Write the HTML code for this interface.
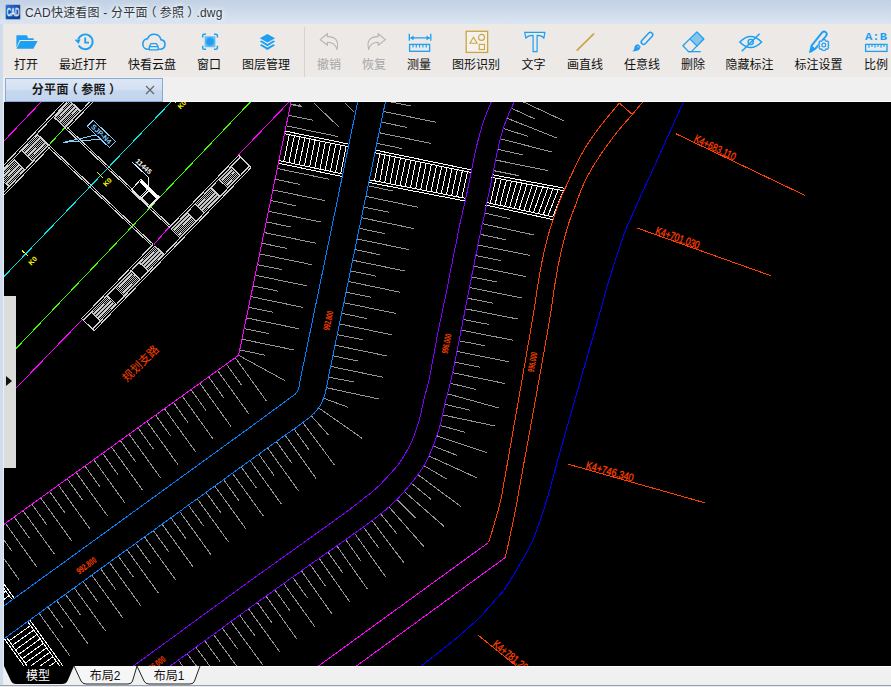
<!DOCTYPE html>
<html lang="zh"><head><meta charset="utf-8"><title>CAD快速看图 - 分平面（参照）.dwg</title>
<style>
html,body{margin:0;padding:0;}
body{width:891px;height:687px;overflow:hidden;position:relative;background:#f0f0f0;
 font-family:"Liberation Sans","Noto Sans CJK SC",sans-serif;}
#title{position:absolute;left:0;top:0;width:891px;height:24px;
 background:linear-gradient(#c2d1e4 0px,#cad8e9 9px,#d7e2ef 20px,#dbe5f1 24px);}
#lborder{position:absolute;left:0;top:24px;width:3px;height:663px;background:#cfdcec;border-right:1px solid #e6edf5;}
#appicon{position:absolute;left:5px;top:4px;width:16px;height:16px;}
#ttext{position:absolute;left:25px;top:4px;font-size:12px;line-height:18px;color:#2e3540;white-space:nowrap;letter-spacing:0.2px;
 text-shadow:0 0 4px #fff,0 0 6px #fff;}
span.pl{position:relative;left:-3px;}span.pr{position:relative;left:3px;}
#toolbar{position:absolute;left:3px;top:24px;width:888px;height:53px;background:#ece9e6;}
.ti{position:absolute;top:0;height:53px;width:0;}
.ti .lb{position:absolute;left:-40px;width:80px;top:33px;text-align:center;font-size:12px;line-height:16px;color:#111;white-space:nowrap;}
.ti.dis .lb{color:#a6a6a6;}
.ti svg{position:absolute;left:-13px;top:5px;width:26px;height:26px;overflow:visible;}
#sep{position:absolute;left:301px;top:3px;width:1px;height:50px;background:#d6d3cf;}
#tabbar{position:absolute;left:3px;top:77px;width:888px;height:25px;background:#f0f0f0;}
#tabbar:after{content:'';position:absolute;left:160px;top:24px;width:728px;height:1px;background:#fcfcfc;}
#tab{position:absolute;left:2px;top:1px;width:158px;border:1px solid #86a9d6;box-sizing:border-box;height:24px;
 background:linear-gradient(#dde8f6 0,#d4e1f3 45%,#c6d7ef 55%,#c3d5ee 100%);}
#tab b{position:absolute;left:-1px;width:140px;top:2px;text-align:center;font-size:12px;line-height:18px;color:#1a1a1a;letter-spacing:0.35px;}
#tab svg{position:absolute;left:139px;top:6px;width:10px;height:10px;}
#cv{position:absolute;left:4px;top:102px;width:887px;height:564px;background:#000;}
#cv svg{position:absolute;left:0;top:0;}
#lpanel{position:absolute;left:4px;top:296px;width:12px;height:172px;background:#dcdcdc;}
#lpanel:after{content:"";position:absolute;left:2px;top:80px;border-left:6px solid #111;border-top:5px solid transparent;border-bottom:5px solid transparent;}
#bottom{position:absolute;left:4px;top:666px;width:887px;height:21px;background:#f0f0f0;border-top:1px solid #fff;box-sizing:border-box;}
#bline{position:absolute;left:0;top:685px;width:891px;height:1px;background:#9aa0a8;}
#bline2{position:absolute;left:0;top:686px;width:891px;height:1px;background:#e8ecf2;}
#btabs{position:absolute;left:4px;top:666px;width:260px;height:20px;}
#btabs text{font-family:"Liberation Sans","Noto Sans CJK SC",sans-serif;font-size:12px;}
</style></head><body>
<div id="title"><svg id="appicon" viewBox="0 0 16 16"><defs><linearGradient id="ag" x1="0" y1="0" x2="1" y2="1"><stop offset="0" stop-color="#2a78d8"/><stop offset="0.5" stop-color="#0b50b4"/><stop offset="1" stop-color="#083c96"/></linearGradient></defs><rect x="0.5" y="0.5" width="15" height="15" rx="1.5" fill="url(#ag)" stroke="#a9b2bd" stroke-width="1"/><text x="8" y="12.2" text-anchor="middle" font-family="Liberation Sans, sans-serif" font-size="10" fill="none" stroke="#fff" stroke-width="0.7" textLength="12.5" lengthAdjust="spacingAndGlyphs">CAD</text></svg><div id="ttext">CAD快速看图 - 分平面<span class="pl">（</span>参照<span class="pr">）</span>.dwg</div></div>
<div id="lborder"></div>
<div id="toolbar">
<div class="ti" style="left:23px"><svg viewBox="0 0 26 26" fill="none"><path d="M3.4 6.3 H13.9 L15.1 9.3 H20.7 V11 H6.6 L3.4 18.8 Z" fill="#1e9ff2"/><path d="M7.4 11.9 H24.6 L20.4 19.8 H3.4 Z" fill="#1e9ff2"/></svg><div class="lb">打开</div></div>
<div class="ti" style="left:80px"><svg viewBox="0 0 26 26" fill="none"><path d="M8.25 10.3 A7.4 7.4 0 1 1 8.8 16.5" stroke="#1e9ff2" stroke-width="1.9"/><path d="M4.6 10.8 L10.6 10.2 L8.6 15 Z" fill="#1e9ff2"/><path d="M15.2 8.6 V13.7 H19" stroke="#1e9ff2" stroke-width="1.8"/></svg><div class="lb">最近打开</div></div>
<div class="ti" style="left:149px"><svg viewBox="0 0 26 26" fill="none"><path d="M9.6 20.3 H8.4 A5.4 5.4 0 0 1 8.6 9.6 A7 7 0 0 1 21.9 10.6 A4.9 4.9 0 0 1 21.6 20.3 H19.8" stroke="#1e9ff2" stroke-width="1.6" stroke-linecap="round"/><path d="M10.3 20.8 V17.6 L12 14.6 H17.4 L19.1 17.6 V20.8 Z M10.3 17.7 H19.1" stroke="#1e9ff2" stroke-width="1.3" stroke-linejoin="round"/></svg><div class="lb">快看云盘</div></div>
<div class="ti" style="left:206px"><svg viewBox="0 0 26 26" fill="none"><defs><radialGradient id="wg"><stop offset="0.55" stop-color="#1e9ff2"/><stop offset="1" stop-color="#6cc0f6"/></radialGradient></defs><rect x="8.6" y="7.2" width="10.8" height="11" fill="url(#wg)"/><path d="M6.7 8.6 V6.6 Q6.7 5.2 8.1 5.2 H10 M18 5.2 H19.9 Q21.4 5.2 21.4 6.6 V8.6 M21.4 16.8 V18.9 Q21.4 20.3 19.9 20.3 H18 M10 20.3 H8.1 Q6.7 20.3 6.7 18.9 V16.8" stroke="#1e9ff2" stroke-width="1.5"/></svg><div class="lb">窗口</div></div>
<div class="ti" style="left:263px"><svg viewBox="0 0 26 26" fill="none"><path d="M14.4 4.9 L22.1 9.2 L14.4 13.6 L6.8 9.2 Z" fill="#1e9ff2"/><path d="M6.8 12.6 L8.6 11.6 L14.4 14.9 L20.3 11.6 L22.1 12.6 L14.4 17.2 Z" fill="#1e9ff2"/><path d="M6.8 16.3 L8.6 15.3 L14.4 18.6 L20.3 15.3 L22.1 16.3 L14.4 20.9 Z" fill="#1e9ff2"/></svg><div class="lb">图层管理</div></div>
<div class="ti dis" style="left:326px"><svg viewBox="0 0 26 26" fill="none"><path d="M4.2 10.6 L11.4 4.7 V7.6 C18.5 7.4 23.5 11 20.9 20.5 C19.8 15.4 17 13.4 11.4 13.3 V16.2 Z" stroke="#b4b4b4" stroke-width="1.1" stroke-linejoin="round"/></svg><div class="lb">撤销</div></div>
<div class="ti dis" style="left:371px"><svg viewBox="0 0 26 26" fill="none"><g transform="translate(28.6 0) scale(-1 1)"><path d="M4.2 10.6 L11.4 4.7 V7.6 C18.5 7.4 23.5 11 20.9 20.5 C19.8 15.4 17 13.4 11.4 13.3 V16.2 Z" stroke="#b4b4b4" stroke-width="1.1" stroke-linejoin="round"/></g></svg><div class="lb">恢复</div></div>
<div class="ti" style="left:416px"><svg viewBox="0 0 26 26" fill="none"><path d="M3.3 4.7 V11.8 M24.8 4.7 V11.8 M4.5 8.9 H23.6" stroke="#1e9ff2" stroke-width="1.3"/><path d="M4 8.9 L7.6 6.6 V11.2 Z M24.1 8.9 L20.5 6.6 V11.2 Z" fill="#1e9ff2"/><rect x="3.6" y="15.4" width="20" height="6.9" stroke="#1e9ff2" stroke-width="1.3"/><path d="M7 15.4 V18.6 M10.3 15.4 V18.6 M13.6 15.4 V18.6 M16.9 15.4 V18.6 M20.2 15.4 V18.6" stroke="#1e9ff2" stroke-width="1.2"/></svg><div class="lb">测量</div></div>
<div class="ti" style="left:473px"><svg viewBox="0 0 26 26" fill="none"><rect x="3.2" y="2.3" width="21.4" height="21.1" fill="#f5f2ed" stroke="#c9a545" stroke-width="1.3"/><path d="M10.5 8.3 L14.1 14.3 H6.9 Z" stroke="#c9a545" stroke-width="1.1"/><circle cx="18.5" cy="8.4" r="3" stroke="#c9a545" stroke-width="1.1"/><rect x="16.2" y="15.4" width="5.3" height="5.1" stroke="#c9a545" stroke-width="1.1"/></svg><div class="lb">图形识别</div></div>
<div class="ti" style="left:530.5px"><svg viewBox="0 0 26 26" fill="none"><path d="M3.7 3.3 H23.9 L22.8 9.3 Q21.2 6.3 16.1 6.3 V22.7 H12.1 V6.3 Q6.6 6.3 4.9 9.3 Z" stroke="#1e9ff2" stroke-width="1.2" stroke-linejoin="round"/></svg><div class="lb">文字</div></div>
<div class="ti" style="left:582px"><svg viewBox="0 0 26 26" fill="none"><path d="M4.7 21.7 L22 4.7" stroke="#c9a545" stroke-width="1.7"/></svg><div class="lb">画直线</div></div>
<div class="ti" style="left:639px"><svg viewBox="0 0 26 26" fill="none"><g transform="translate(17.8 9.6) rotate(-47)"><rect x="-7" y="-2.3" width="14.6" height="4.6" rx="2.2" stroke="#1e9ff2" stroke-width="1.5"/></g><path d="M11.6 17.4 Q11.2 21.5 6.8 21.9 Q4.6 22.1 3.2 22.8 Q5.4 20.6 5.4 18.4 Q5.8 15.4 9.2 15.2 Z" fill="#1e9ff2"/><path d="M8.3 17 L9.9 18.6" stroke="#eee" stroke-width="0.8"/></svg><div class="lb">任意线</div></div>
<div class="ti" style="left:690px"><svg viewBox="0 0 26 26" fill="none"><path d="M16.9 2.9 L23.9 10 L11.4 22.6 H8.6 L2.9 16.8 Z" stroke="#1e9ff2" stroke-width="1.3" stroke-linejoin="round"/><path d="M16.9 2.9 L23.9 10 L17.3 17.4 L10.3 10.4 Z" fill="#1e9ff2" fill-opacity="0.5"/><path d="M10.3 10.4 L17.3 17.4 M7.8 22.6 H20.8" stroke="#1e9ff2" stroke-width="1.3"/></svg><div class="lb">删除</div></div>
<div class="ti" style="left:746.5px"><svg viewBox="0 0 26 26" fill="none"><path d="M2.8 13 Q13.7 1.8 24.6 13 Q13.7 24.2 2.8 13 Z" stroke="#1e9ff2" stroke-width="1.5"/><circle cx="13.7" cy="13" r="2.6" stroke="#1e9ff2" stroke-width="1.4"/><path d="M4.8 22.3 L22.6 4.7" stroke="#1e9ff2" stroke-width="1.5"/></svg><div class="lb">隐藏标注</div></div>
<div class="ti" style="left:815.5px"><svg viewBox="0 0 26 26" fill="none"><path d="M16 3.6 Q18 1.6 20 3.4 Q21.6 5 20 7 L9.4 19.6 L4.1 22.9 L5.6 16.6 Z" stroke="#1e9ff2" stroke-width="1.9" stroke-linejoin="round"/><path d="M5.6 16.6 L9.4 19.6 L4.1 22.9 Z" fill="#1e9ff2"/><circle cx="17.8" cy="16.1" r="5.6" fill="#ece9e6"/><path d="M17.8 10.6 l1.6 0.3 0.6 1.4 1.5 -0.3 1.2 1.4 -0.7 1.3 0.9 1.3 -0.9 1.4 0.7 1.3 -1.2 1.4 -1.5 -0.3 -0.6 1.4 -1.6 0.3 -1.6 -0.3 -0.6 -1.4 -1.5 0.3 -1.2 -1.4 0.7 -1.3 -0.9 -1.4 0.9 -1.3 -0.7 -1.3 1.2 -1.4 1.5 0.3 0.6 -1.4 Z" stroke="#1e9ff2" stroke-width="1.2" stroke-linejoin="round"/><circle cx="17.8" cy="16.1" r="1.9" stroke="#1e9ff2" stroke-width="1.2"/></svg><div class="lb">标注设置</div></div>
<div class="ti" style="left:873px"><svg viewBox="0 0 26 26" fill="none"><text x="13" y="11.2" text-anchor="middle" font-family="Liberation Mono, monospace" font-weight="bold" font-size="10" fill="#1e9ff2" textLength="22" lengthAdjust="spacingAndGlyphs">A:B</text><rect x="2.6" y="15.4" width="21.4" height="7" stroke="#1e9ff2" stroke-width="1.3"/><path d="M6 15.4 V18.8 M9 15.4 V18 M12 15.4 V18.8 M15 15.4 V18 M18 15.4 V18.8 M21 15.4 V18" stroke="#1e9ff2" stroke-width="1.1"/></svg><div class="lb">比例</div></div>
<div id="sep"></div></div>
<div id="tabbar"><div id="tab"><b>分平面<span class="pl">（</span>参照<span class="pr">）</span></b><svg viewBox="0 0 10 10"><path d="M1 1 L9 9 M9 1 L1 9" stroke="#666" stroke-width="1.2" fill="none"/></svg></div></div>
<div id="cv"><svg width="887" height="564" viewBox="4 102 887 564" shape-rendering="crispEdges" fill="none" stroke-width="1">
<rect x="4" y="102" width="887" height="564" fill="#000"/>
<path stroke="#959595" d="M290.5 104.5 L300.3 106.5 M288.3 115.2 L313.3 120.3 M286.1 125.8 L338.3 136.6 M283.9 136.5 L308.9 141.7 M281.7 147.2 L333.9 158 M279.5 157.8 L304.4 163 M277.3 168.5 L329.4 179.3 M275.1 179.2 L300 184.4 M272.8 189.9 L325 200.7 M270.6 200.5 L295.6 205.7 M268.4 211.2 L320.6 222 M266.2 221.9 L291.2 227 M264 232.5 L316.2 243.3 M261.8 243.2 L286.8 248.4 M259.6 253.9 L311.8 264.7 M257.4 264.6 L282.3 269.7 M255.2 275.2 L307.4 286 M253 285.9 L277.9 291.1 M250.8 296.6 L302.9 307.4 M248.6 307.2 L273.5 312.4 M246.3 317.9 L298.5 328.7 M244.1 328.6 L269.1 333.7 M241.9 339.2 L294.1 350 M239.7 349.9 L264.7 355.1 M238.6 355.3 L284.7 380.5 M235.2 357.7 L266.5 401.2 M226.4 364.1 L241.6 385.2 M217.5 370.5 L248.8 413.9 M208.7 376.9 L223.9 398 M199.8 383.2 L231.1 426.6 M191 389.6 L206.2 410.7 M182.2 396 L213.4 439.4 M173.3 402.3 L188.5 423.4 M164.5 408.7 L195.8 452.1 M155.6 415.1 L170.8 436.2 M146.8 421.4 L178.1 464.8 M138 427.8 L153.2 448.9 M129.1 434.2 L160.4 477.6 M120.3 440.5 L135.5 461.6 M111.4 446.9 L142.7 490.3 M102.6 453.3 L117.8 474.4 M93.8 459.7 L125 503.1 M84.9 466 L100.1 487.1 M76.1 472.4 L107.4 515.8 M67.2 478.8 L82.4 499.9 M58.4 485.1 L89.7 528.5 M49.6 491.5 L64.8 512.6 M40.7 497.9 L72 541.3 M31.9 504.2 L47.1 525.3 M23 510.6 L54.3 554 M14.2 517 L29.4 538.1 M5.4 523.3 L36.6 566.8 M-3.5 529.7 L11.7 550.8 M-12.3 536.1 L19 579.5 M-21.2 542.5 L-6 563.6 M-30 548.8 L1.3 592.2 M-38.8 555.2 L-23.6 576.3 M-47.7 561.6 L-16.4 605 M-56.5 567.9 L-41.3 589 M387.8 90.2 L440 101 M385.6 100.8 L411 106.1 M383.4 111.4 L435.6 122.2 M381.2 122.1 L406.7 127.3 M379 132.7 L431.2 143.5 M376.8 143.3 L402.3 148.6 M374.6 153.9 L426.8 164.7 M372.4 164.6 L397.9 169.8 M370.2 175.2 L422.4 186 M368 185.8 L393.5 191.1 M365.8 196.4 L418 207.2 M363.6 207.1 L389.1 212.3 M361.4 217.7 L413.6 228.5 M359.2 228.3 L384.7 233.6 M357 238.9 L409.2 249.7 M354.8 249.6 L380.3 254.8 M352.6 260.2 L404.8 271 M350.4 270.8 L375.9 276.1 M348.2 281.4 L400.4 292.3 M346 292.1 L371.5 297.3 M343.8 302.7 L396 313.5 M341.6 313.3 L367.1 318.6 M339.4 323.9 L391.6 334.8 M337.2 334.6 L362.7 339.8 M335 345.2 L387.2 356 M332.8 355.8 L358.3 361.1 M330.6 366.4 L382.8 377.2 M328.5 377.1 L354 382 M326.4 387.7 L378.5 398.9 M323.5 398.2 L347.9 407.2 M318.6 407.8 L362.2 438.4 M311.3 415.8 L328.7 435.2 M302.8 422.6 L334.7 465.3 M294 428.9 L309.2 450.1 M285.2 435.2 L316.2 478.6 M276.4 441.5 L291.5 462.7 M267.6 447.9 L298.7 491.1 M258.8 454.2 L273.9 475.3 M250 460.5 L281.2 503.8 M241.2 466.9 L256.4 488 M232.4 473.3 L263.6 516.4 M223.6 479.6 L238.8 500.7 M214.8 486 L246.1 529.2 M206 492.4 L221.3 513.4 M197.2 498.7 L228.5 541.9 M188.4 505.1 L203.7 526.1 M179.7 511.5 L210.9 554.6 M170.9 517.8 L186.1 538.9 M162.1 524.2 L193.4 567.3 M153.3 530.5 L168.6 551.6 M144.5 536.9 L175.8 580.1 M135.7 543.3 L151 564.3 M126.9 549.6 L158.2 592.8 M118.2 556 L133.4 577.1 M109.4 562.4 L140.6 605.5 M100.6 568.7 L115.8 589.8 M91.8 575.1 L123.1 618.3 M83 581.5 L98.3 602.5 M74.2 587.8 L105.5 631 M65.4 594.2 L80.7 615.3 M56.6 600.6 L87.9 643.7 M47.9 606.9 L63.1 628 M39.1 613.3 L70.3 656.5 M520.5 88.6 L544 99.6 M515.9 98.4 L564.1 121 M511.3 108.2 L534.9 119 M507 118.2 L556.5 137.9 M503.3 128.4 L528 136.4 M500.3 138.8 L551.9 152 M497.8 149.4 L523.2 155 M495.6 160 L547.8 170.6 M493.5 170.6 L519 175.7 M491.3 181.3 L543.6 191.9 M489.2 191.9 L514.6 197.1 M487 202.5 L539.2 213.5 M484.7 213.1 L510.1 218.7 M482.4 223.7 L534.5 235.1 M480.1 234.3 L505.5 239.7 M477.9 245 L530.2 255.5 M475.8 255.6 L501.3 260.7 M473.7 266.2 L526 276.6 M471.6 276.9 L497.1 282 M469.5 287.5 L521.8 297.9 M467.4 298.2 L492.9 303.2 M465.3 308.8 L517.6 319 M463.2 319.5 L488.7 324.4 M461.1 330.1 L513.4 340.3 M459.1 340.8 L484.6 345.7 M457 351.4 L509.2 361.9 M454.8 362.1 L480.3 367.3 M452.6 372.7 L504.8 383.5 M450.3 383.3 L475.6 389.3 M447.5 393.8 L498.9 408 M444.8 404.3 L470.1 410.2 M442.5 414.9 L494.7 425.9 M440.1 425.4 L465.1 432.3 M436.8 435.8 L487.4 452.8 M433.2 446 L457.3 455.5 M428.9 456 L477.4 478.1 M424 465.7 L446.4 478.8 M417.9 474.7 L460.7 506.4 M411.3 483.2 L431.4 499.6 M404.2 491.5 L444.3 526.6 M396.9 499.4 L415.3 517.8 M388.9 506.8 L424.1 546.9 M380.7 513.8 L397 534 M372.1 520.5 L404.1 563.1 M363.4 527 L378.7 547.9 M354.6 533.3 L385.5 576.7 M345.7 539.6 L360.7 560.8 M336.8 545.8 L367.6 589.4 M328 552.1 L343 573.3 M319.1 558.3 L349.8 601.9 M310.2 564.6 L325.2 585.8 M301.4 570.8 L332.2 614.3 M292.5 577.1 L307.7 598.3 M283.7 583.5 L314.8 626.8 M274.9 589.8 L290 610.9 M266.1 596.1 L297.1 639.4 M257.3 602.4 L272.4 623.5 M248.5 608.8 L279.8 651.9 M239.7 615.2 L255.1 636.1 M230.9 621.6 L262.5 664.6 M222.2 628 L237.6 648.9 M213.4 634.4 L245 677.4 M204.7 640.8 L220.1 661.8 M195.9 647.2 L227.5 690.2 M187.2 653.6 L202.6 674.6 M178.4 660.1 L209.9 703 M169.7 666.5 L185 687.5 M160.9 672.9 L192.4 715.9"/>
<path stroke="#959595" d="M313.8 103 L339 127 M344.9 103 L354.2 112 M291.5 104 L301 106.3 L299.5 104.3"/>
<path fill="#000" stroke="none" d="M285.2 131.1 L348.8 144.1 L342.4 176.6 L278.6 163.2 Z"/>
<path fill="#000" stroke="none" d="M375.7 150.2 L472 170 L465.3 201 L369.3 182.5 Z"/>
<path fill="#000" stroke="none" d="M492 174.7 L564.5 188.2 L552.7 219.5 L485.4 205 Z"/>
<path stroke="#ffffff" d="M285.2 131.1 L348.8 144.1 M278.6 163.2 L342.4 176.6 M284.7 133.7 L348.3 146.7 M279.1 160.6 L342.9 174 M289.3 134.7 L283.8 161.5 M294.4 135.7 L288.9 162.6 M299.6 136.8 L294.1 163.7 M304.8 137.9 L299.3 164.8 M309.9 138.9 L304.5 165.9 M315.1 140 L309.7 167 M320.2 141 L314.8 168.1 M325.4 142.1 L320 169.1 M330.6 143.1 L325.2 170.2 M335.7 144.2 L330.4 171.3 M340.9 145.2 L335.6 172.4 M346.1 146.3 L340.7 173.5 M375.7 150.2 L472 170 M369.3 182.5 L465.3 201 M375.2 152.8 L471.5 172.6 M369.8 179.9 L465.8 198.4 M379.8 153.8 L374.4 180.7 M384.9 154.9 L379.6 181.7 M390.1 155.9 L384.7 182.7 M395.3 157 L389.9 183.7 M400.4 158 L395 184.7 M405.6 159.1 L400.1 185.7 M410.8 160.2 L405.3 186.7 M415.9 161.2 L410.4 187.7 M421.1 162.3 L415.6 188.7 M426.2 163.3 L420.7 189.7 M431.4 164.4 L425.9 190.7 M436.6 165.5 L431 191.6 M441.7 166.5 L436.2 192.6 M446.9 167.6 L441.3 193.6 M452 168.7 L446.5 194.6 M457.2 169.7 L451.6 195.6 M462.4 170.8 L456.7 196.6 M467.5 171.8 L461.9 197.6 M492 174.7 L564.5 188.2 M485.4 205 L552.7 219.5 M491.4 177.3 L563.9 190.8 M486 202.4 L553.3 216.9 M496 178.2 L490.3 203.3 M501.2 179.2 L495.1 204.3 M506.4 180.1 L499.9 205.4 M511.6 181.1 L504.7 206.4 M516.8 182.1 L509.5 207.4 M522 183 L514.3 208.5 M527.1 184 L519.1 209.5 M532.3 185 L523.9 210.5 M537.5 185.9 L528.7 211.6 M542.7 186.9 L533.5 212.6 M547.9 187.8 L538.4 213.6 M553 188.8 L543.2 214.7 M558.2 189.8 L548 215.7 M563.4 190.7 L552.8 216.8"/>
<path stroke="#ffffff" d="M4.1 638.4 L45 695.2 M6.2 636.9 L47.1 693.7 M27.6 621.4 L68.5 678.2 M29.7 619.9 L70.7 676.7 M9.1 640.9 L30.6 625.5 M12.3 645.4 L33.8 630 M15.6 649.9 L37 634.4 M18.8 654.3 L40.2 638.9 M22 658.8 L43.4 643.4 M25.2 663.2 L46.6 647.8 M28.4 667.7 L49.8 652.3 M31.6 672.2 L53.1 656.7 M34.9 676.6 L56.3 661.2 M38.1 681.1 L59.5 665.7 M41.3 685.6 L62.7 670.1 M44.5 690 L65.9 674.6 M13.8 597.7 L-3.7 573.4 M11.7 599.2 L-5.8 574.9 M9.1 595.6 L-7.2 607.3 M5.8 591.1 L-10.4 602.8 M2.6 586.6 L-13.6 598.3 M-0.6 582.2 L-16.8 593.9 M-3.8 577.7 L-20 589.4"/>
<path stroke="#ff00ff" d="M295.6 80 L238.6 355.3 L-10 534.4"/>
<path stroke="#0080ff" d="M362.2 80 L300.2 380 L299.2 386.5 L298 390.3 L295.4 394 L250 427.4 L4.1 605.7 L-10 615.9"/>
<path stroke="#0080ff" d="M389.9 80 L389.6 81.5 L389.3 83 L389 84.5 L388.6 86.1 L388.3 87.6 L388 89.1 L387.7 90.6 L387.4 92.1 L387.1 93.6 L386.8 95.1 L386.5 96.6 L386.1 98.1 L385.8 99.6 L385.5 101.1 L385.2 102.6 L384.9 104.1 L384.6 105.6 L384.3 107.1 L384 108.6 L383.7 110.1 L383.4 111.6 L383.1 113 L382.8 114.5 L382.5 116 L382.1 117.5 L381.8 118.9 L381.5 120.4 L381.2 121.9 L380.9 123.4 L380.6 124.8 L380.3 126.3 L380 127.8 L379.7 129.3 L379.4 130.7 L379.1 132.2 L378.8 133.7 L378.5 135.2 L378.2 136.6 L377.9 138.1 L377.6 139.6 L377.3 141.1 L377 142.5 L376.7 144 L376.3 145.5 L376 147 L375.7 148.4 L375.4 149.9 L375.1 151.4 L374.8 152.9 L374.5 154.3 L374.2 155.8 L373.9 157.3 L373.6 158.8 L373.3 160.2 L373 161.7 L372.7 163.2 L372.4 164.7 L372.1 166.1 L371.8 167.6 L371.5 169.1 L371.2 170.6 L370.9 172.1 L370.5 173.5 L370.2 175 L369.9 176.5 L369.6 178 L369.3 179.4 L369 180.9 L368.7 182.4 L368.4 183.9 L368.1 185.3 L367.8 186.8 L367.5 188.3 L367.2 189.8 L366.9 191.2 L366.6 192.7 L366.3 194.2 L366 195.7 L365.7 197.1 L365.4 198.6 L365 200.1 L364.7 201.6 L364.4 203 L364.1 204.5 L363.8 206 L363.5 207.5 L363.2 208.9 L362.9 210.4 L362.6 211.9 L362.3 213.4 L362 214.8 L361.7 216.3 L361.4 217.8 L361.1 219.3 L360.8 220.7 L360.5 222.2 L360.2 223.7 L359.9 225.2 L359.6 226.6 L359.2 228.1 L358.9 229.6 L358.6 231.1 L358.3 232.5 L358 234 L357.7 235.5 L357.4 237 L357.1 238.4 L356.8 239.9 L356.5 241.4 L356.2 242.9 L355.9 244.3 L355.6 245.8 L355.3 247.3 L355 248.8 L354.7 250.2 L354.4 251.7 L354.1 253.2 L353.8 254.7 L353.4 256.1 L353.1 257.6 L352.8 259.1 L352.5 260.6 L352.2 262 L351.9 263.5 L351.6 265 L351.3 266.5 L351 267.9 L350.7 269.4 L350.4 270.9 L350.1 272.4 L349.8 273.8 L349.5 275.3 L349.2 276.8 L348.9 278.3 L348.6 279.7 L348.3 281.2 L348 282.7 L347.6 284.2 L347.3 285.6 L347 287.1 L346.7 288.6 L346.4 290.1 L346.1 291.5 L345.8 293 L345.5 294.5 L345.2 296 L344.9 297.4 L344.6 298.9 L344.3 300.4 L344 301.9 L343.7 303.3 L343.4 304.8 L343.1 306.3 L342.8 307.8 L342.5 309.2 L342.1 310.7 L341.8 312.2 L341.5 313.6 L341.2 315.1 L340.9 316.6 L340.6 318.1 L340.3 319.5 L340 321 L339.7 322.5 L339.4 324 L339.1 325.4 L338.8 326.9 L338.5 328.4 L338.2 329.9 L337.9 331.3 L337.6 332.8 L337.3 334.3 L337 335.8 L336.7 337.2 L336.3 338.7 L336 340.2 L335.7 341.7 L335.4 343.1 L335.1 344.6 L334.8 346.1 L334.5 347.6 L334.2 349 L333.9 350.5 L333.6 352 L333.3 353.5 L333 354.9 L332.7 356.4 L332.4 357.9 L332.1 359.4 L331.8 360.8 L331.5 362.3 L331.2 363.8 L330.9 365.3 L330.5 366.7 L330.2 368.2 L329.9 369.7 L329.6 371.2 L329.3 372.6 L329 374.1 L328.7 375.6 L328.5 377.1 L328.2 378.7 L327.9 380.2 L327.6 381.7 L327.3 383.2 L327 384.7 L326.7 386.2 L326.4 387.7 L326.1 389.2 L325.7 390.7 L325.4 392.2 L325 393.6 L324.6 395.1 L324.1 396.5 L323.6 397.8 L323.1 399.2 L322.6 400.6 L322 401.9 L321.4 403.2 L320.7 404.5 L320 405.8 L319.2 407 L318.3 408.2 L317.4 409.4 L316.5 410.6 L315.5 411.7 L314.5 412.8 L313.4 413.9 L312.3 415 L311.1 416 L309.9 417 L308.7 418 L307.5 419 L306.3 420 L305.1 420.9 L303.8 421.8 L302.6 422.7 L301.4 423.6 L300.1 424.5 L298.9 425.4 L297.7 426.3 L296.5 427.2 L295.3 428.1 L294.1 428.9 L292.9 429.8 L291.7 430.6 L290.5 431.5 L289.2 432.3 L288 433.2 L286.8 434.1 L285.6 434.9 L284.4 435.8 L283.2 436.6 L282 437.5 L280.8 438.4 L279.6 439.2 L278.4 440.1 L277.2 441 L275.9 441.9 L274.7 442.7 L273.5 443.6 L272.3 444.5 L271 445.4 L269.8 446.3 L268.6 447.1 L267.3 448 L266.1 448.9 L264.9 449.8 L263.6 450.7 L262.4 451.6 L261.1 452.5 L259.9 453.4 L258.7 454.3 L257.4 455.2 L256.2 456 L255 456.9 L253.7 457.8 L252.5 458.7 L251.3 459.6 L250 460.5 L248.8 461.4 L247.6 462.3 L246.4 463.1 L245.1 464 L243.9 464.9 L242.7 465.8 L241.5 466.7 L240.3 467.6 L239 468.4 L237.8 469.3 L236.6 470.2 L235.4 471.1 L234.2 472 L233 472.9 L231.7 473.7 L230.5 474.6 L229.3 475.5 L228.1 476.4 L226.9 477.3 L225.6 478.1 L224.4 479 L223.2 479.9 L222 480.8 L220.8 481.7 L219.6 482.6 L218.3 483.4 L217.1 484.3 L215.9 485.2 L214.7 486.1 L213.5 487 L212.2 487.8 L211 488.7 L209.8 489.6 L208.6 490.5 L207.4 491.4 L206.2 492.3 L204.9 493.1 L203.7 494 L202.5 494.9 L201.3 495.8 L200.1 496.7 L198.9 497.6 L197.6 498.4 L196.4 499.3 L195.2 500.2 L194 501.1 L192.8 502 L191.5 502.8 L190.3 503.7 L189.1 504.6 L187.9 505.5 L186.7 506.4 L185.5 507.3 L184.2 508.1 L183 509 L181.8 509.9 L180.6 510.8 L179.4 511.7 L178.1 512.5 L176.9 513.4 L175.7 514.3 L174.5 515.2 L173.3 516.1 L172.1 517 L170.8 517.8 L169.6 518.7 L168.4 519.6 L167.2 520.5 L166 521.4 L164.8 522.3 L163.5 523.1 L162.3 524 L161.1 524.9 L159.9 525.8 L158.7 526.7 L157.4 527.5 L156.2 528.4 L155 529.3 L153.8 530.2 L152.6 531.1 L151.4 532 L150.1 532.8 L148.9 533.7 L147.7 534.6 L146.5 535.5 L145.3 536.4 L144 537.2 L142.8 538.1 L141.6 539 L140.4 539.9 L139.2 540.8 L138 541.7 L136.7 542.5 L135.5 543.4 L134.3 544.3 L133.1 545.2 L131.9 546.1 L130.7 547 L129.4 547.8 L128.2 548.7 L127 549.6 L125.8 550.5 L124.6 551.4 L123.3 552.2 L122.1 553.1 L120.9 554 L119.7 554.9 L118.5 555.8 L117.3 556.7 L116 557.5 L114.8 558.4 L113.6 559.3 L112.4 560.2 L111.2 561.1 L110 562 L108.7 562.8 L107.5 563.7 L106.3 564.6 L105.1 565.5 L103.9 566.4 L102.6 567.2 L101.4 568.1 L100.2 569 L99 569.9 L97.8 570.8 L96.6 571.7 L95.3 572.5 L94.1 573.4 L92.9 574.3 L91.7 575.2 L90.5 576.1 L89.2 576.9 L88 577.8 L86.8 578.7 L85.6 579.6 L84.4 580.5 L83.2 581.4 L81.9 582.2 L80.7 583.1 L79.5 584 L78.3 584.9 L77.1 585.8 L75.9 586.7 L74.6 587.5 L73.4 588.4 L72.2 589.3 L71 590.2 L69.8 591.1 L68.5 591.9 L67.3 592.8 L66.1 593.7 L64.9 594.6 L63.7 595.5 L62.5 596.4 L61.2 597.2 L60 598.1 L58.8 599 L57.6 599.9 L56.4 600.8 L55.1 601.6 L53.9 602.5 L52.7 603.4 L51.5 604.3 L50.3 605.2 L49.1 606.1 L47.8 606.9 L46.6 607.8 L45.4 608.7 L44.2 609.6 L43 610.5 L41.8 611.4 L40.5 612.2 L39.3 613.1 L38.1 614 L36.9 614.9 L35.7 615.8 L34.4 616.6 L33.2 617.5 L32 618.4 L30.8 619.3 L29.6 620.2 L28.4 621.1 L27.1 621.9 L25.9 622.8 L24.7 623.7 L23.5 624.6 L22.3 625.5 L21 626.3 L19.8 627.2 L18.6 628.1 L17.4 629 L16.2 629.9 L15 630.8 L13.7 631.6 L12.5 632.5 L11.3 633.4 L10.1 634.3 L8.9 635.2 L7.7 636 L6.5 636.9 L5.3 637.8 L4.1 638.6 L2.9 639.5 L1.7 640.4 L0.5 641.2 L-0.7 642.1 L-1.8 642.9 L-3 643.7 L-4.2 644.6 L-5.3 645.4 L-6.5 646.3 L-7.7 647.1 L-8.8 648 L-10 648.8"/>
<path stroke="#8000ff" d="M502 80 L501.3 81.4 L500.6 82.7 L500 84.1 L499.3 85.4 L498.6 86.8 L497.9 88.1 L497.3 89.5 L496.6 90.8 L495.9 92.2 L495.2 93.5 L494.6 94.9 L493.9 96.2 L493.2 97.6 L492.6 99 L492 100.3 L491.4 101.7 L490.7 103.1 L490.1 104.4 L489.6 105.8 L489 107.2 L488.4 108.6 L487.9 110 L487.3 111.4 L486.8 112.8 L486.3 114.2 L485.8 115.5 L485.2 116.9 L484.7 118.3 L484.2 119.7 L483.7 121.1 L483.3 122.6 L482.8 124 L482.3 125.4 L481.9 126.8 L481.4 128.3 L481 129.7 L480.6 131.1 L480.1 132.6 L479.7 134 L479.3 135.5 L479 136.9 L478.6 138.4 L478.2 139.8 L477.8 141.3 L477.4 142.8 L477.1 144.2 L476.7 145.7 L476.4 147.2 L476 148.7 L475.7 150.2 L475.3 151.6 L475 153.1 L474.7 154.6 L474.4 156.1 L474.1 157.6 L473.8 159.2 L473.5 160.7 L473.2 162.2 L472.9 163.7 L472.6 165.2 L472.3 166.7 L472 168.2 L471.7 169.7 L471.4 171.2 L471.1 172.7 L470.8 174.2 L470.5 175.7 L470.2 177.1 L469.9 178.6 L469.6 180.1 L469.3 181.6 L469 183.1 L468.6 184.6 L468.3 186.1 L468 187.6 L467.7 189.1 L467.4 190.6 L467.1 192.1 L466.8 193.5 L466.5 195 L466.2 196.5 L465.9 197.9 L465.6 199.4 L465.2 200.9 L464.9 202.3 L464.6 203.7 L464.3 205.2 L463.9 206.6 L463.6 208 L463.3 209.4 L462.9 210.8 L462.6 212.2 L462.3 213.6 L461.9 215 L461.6 216.5 L461.3 217.9 L461 219.3 L460.7 220.7 L460.3 222.2 L460 223.6 L459.7 225.1 L459.4 226.5 L459.1 228 L458.8 229.4 L458.5 230.9 L458.2 232.3 L457.9 233.8 L457.6 235.3 L457.3 236.7 L457.1 238.2 L456.8 239.7 L456.5 241.1 L456.2 242.6 L455.9 244.1 L455.6 245.5 L455.3 247 L455 248.5 L454.7 249.9 L454.4 251.4 L454.1 252.9 L453.8 254.3 L453.5 255.8 L453.2 257.3 L452.9 258.7 L452.6 260.2 L452.4 261.7 L452.1 263.1 L451.8 264.6 L451.5 266.1 L451.2 267.5 L450.9 269 L450.6 270.5 L450.3 271.9 L450 273.4 L449.7 274.9 L449.4 276.4 L449.1 277.8 L448.8 279.3 L448.6 280.8 L448.3 282.3 L448 283.7 L447.7 285.2 L447.4 286.7 L447.1 288.2 L446.8 289.7 L446.5 291.1 L446.2 292.6 L445.9 294.1 L445.7 295.6 L445.4 297.1 L445.1 298.5 L444.7 300 L444.4 301.5 L444.1 303 L443.8 304.5 L443.5 306 L443.2 307.5 L442.9 309 L442.6 310.5 L442.2 312 L441.9 313.5 L441.6 315 L441.3 316.5 L441 318 L440.6 319.5 L440.3 321 L440 322.5 L439.7 324 L439.4 325.5 L439.1 327 L438.8 328.5 L438.5 330 L438.2 331.5 L437.9 333 L437.6 334.5 L437.3 336 L437 337.5 L436.7 339 L436.5 340.5 L436.2 342 L435.9 343.4 L435.6 344.9 L435.4 346.4 L435.1 347.9 L434.8 349.4 L434.5 350.9 L434.3 352.4 L434 353.9 L433.7 355.4 L433.4 356.9 L433.1 358.4 L432.9 359.9 L432.6 361.4 L432.3 362.9 L432 364.4 L431.8 365.9 L431.5 367.4 L431.2 368.8 L430.9 370.3 L430.7 371.8 L430.4 373.3 L430.1 374.8 L429.8 376.3 L429.5 377.8 L429.1 379.3 L428.8 380.8 L428.4 382.3 L428.1 383.7 L427.7 385.2 L427.3 386.7 L427 388.2 L426.6 389.7 L426.1 391.1 L425.7 392.6 L425.4 394.1 L425 395.5 L424.6 397 L424.2 398.5 L423.9 399.9 L423.5 401.4 L423.2 402.8 L422.9 404.2 L422.6 405.7 L422.2 407.1 L421.9 408.5 L421.7 410 L421.3 411.4 L421 412.8 L420.7 414.2 L420.3 415.7 L420 417.1 L419.6 418.5 L419.2 419.9 L418.8 421.3 L418.4 422.8 L418 424.2 L417.5 425.6 L417 427 L416.6 428.4 L416.1 429.9 L415.6 431.3 L415.1 432.7 L414.7 434.1 L414.1 435.5 L413.6 436.9 L413 438.3 L412.5 439.7 L411.9 441 L411.3 442.4 L410.6 443.8 L410 445.1 L409.3 446.5 L408.6 447.8 L407.9 449.1 L407.1 450.4 L406.4 451.8 L405.7 453.1 L404.9 454.4 L404.2 455.7 L403.4 457 L402.6 458.2 L401.8 459.5 L400.9 460.7 L400.1 462 L399.2 463.2 L398.3 464.4 L397.4 465.5 L396.5 466.7 L395.5 467.8 L394.5 469 L393.5 470.1 L392.5 471.2 L391.5 472.3 L390.5 473.4 L389.5 474.5 L388.6 475.6 L387.6 476.7 L386.6 477.8 L385.6 478.9 L384.6 480 L383.6 481.1 L382.5 482.2 L381.5 483.3 L380.4 484.4 L379.4 485.4 L378.3 486.4 L377.2 487.5 L376.1 488.5 L374.9 489.5 L373.8 490.4 L372.6 491.4 L371.5 492.4 L370.3 493.3 L369.1 494.3 L367.9 495.2 L366.7 496.2 L365.5 497.1 L364.3 498 L363.1 499 L361.9 499.9 L360.7 500.9 L359.5 501.8 L358.3 502.8 L357.1 503.7 L356 504.7 L354.8 505.6 L353.6 506.5 L352.4 507.4 L351.2 508.4 L350 509.3 L348.8 510.2 L347.6 511 L346.4 511.9 L345.2 512.8 L344 513.7 L342.8 514.6 L341.6 515.4 L340.4 516.3 L339.2 517.1 L338 518 L336.8 518.8 L335.6 519.7 L334.4 520.6 L333.2 521.4 L332 522.3 L330.8 523.1 L329.6 524 L328.4 524.8 L327.2 525.7 L326 526.6 L324.8 527.4 L323.6 528.3 L322.3 529.2 L321.1 530.1 L319.9 530.9 L318.7 531.8 L317.4 532.7 L316.2 533.6 L315 534.5 L313.7 535.4 L312.5 536.3 L311.2 537.2 L310 538 L308.7 538.9 L307.5 539.8 L306.2 540.7 L305 541.6 L303.8 542.5 L302.5 543.4 L301.3 544.3 L300 545.2 L298.8 546 L297.6 546.9 L296.4 547.8 L295.1 548.7 L293.9 549.6 L292.7 550.4 L291.5 551.3 L290.2 552.2 L289 553 L287.8 553.9 L286.6 554.8 L285.4 555.6 L284.1 556.5 L282.9 557.4 L281.7 558.3 L280.5 559.1 L279.3 560 L278 560.9 L276.8 561.7 L275.6 562.6 L274.4 563.5 L273.2 564.4 L272 565.2 L270.7 566.1 L269.5 567 L268.3 567.8 L267.1 568.7 L265.9 569.6 L264.6 570.5 L263.4 571.3 L262.2 572.2 L261 573.1 L259.8 573.9 L258.5 574.8 L257.3 575.7 L256.1 576.5 L254.9 577.4 L253.7 578.3 L252.4 579.2 L251.2 580 L250 580.9 L248.8 581.8 L247.6 582.7 L246.4 583.6 L245.2 584.4 L244 585.3 L242.8 586.2 L241.5 587.1 L240.3 588 L239.1 588.8 L237.9 589.7 L236.7 590.6 L235.5 591.5 L234.3 592.4 L233.1 593.3 L231.9 594.1 L230.7 595 L229.5 595.9 L228.2 596.8 L227 597.7 L225.8 598.5 L224.6 599.4 L223.4 600.3 L222.2 601.2 L221 602.1 L219.8 603 L218.6 603.8 L217.4 604.7 L216.2 605.6 L215 606.5 L213.8 607.4 L212.5 608.3 L211.3 609.1 L210.1 610 L208.9 610.9 L207.7 611.8 L206.5 612.7 L205.3 613.5 L204.1 614.4 L202.9 615.3 L201.7 616.2 L200.5 617.1 L199.2 618 L198 618.8 L196.8 619.7 L195.6 620.6 L194.4 621.5 L193.2 622.4 L192 623.2 L190.8 624.1 L189.6 625 L188.4 625.9 L187.2 626.8 L186 627.7 L184.8 628.5 L183.5 629.4 L182.3 630.3 L181.1 631.2 L179.9 632.1 L178.7 633 L177.5 633.8 L176.3 634.7 L175.1 635.6 L173.9 636.5 L172.7 637.4 L171.5 638.2 L170.2 639.1 L169 640 L167.8 640.9 L166.6 641.8 L165.4 642.7 L164.2 643.5 L163 644.4 L161.8 645.3 L160.6 646.2 L159.4 647.1 L158.2 648 L157 648.8 L155.8 649.7 L154.5 650.6 L153.3 651.5 L152.1 652.4 L150.9 653.2 L149.7 654.1 L148.5 655 L147.3 655.9 L146.1 656.8 L144.9 657.7 L143.7 658.5 L142.5 659.4 L141.2 660.3 L140 661.2 L138.8 662.1 L137.6 662.9 L136.4 663.8 L135.3 664.7 L134.1 665.5 L132.9 666.4 L131.7 667.3 L130.5 668.1 L129.3 669 L128.2 669.8 L127 670.7 L125.8 671.5 L124.7 672.4 L123.5 673.2 L122.3 674.1 L121.2 674.9 L120 675.8"/>
<path stroke="#8000ff" d="M524.5 80 L523.9 81.4 L523.2 82.7 L522.6 84.1 L522 85.4 L521.3 86.8 L520.7 88.1 L520.1 89.5 L519.4 90.8 L518.8 92.2 L518.1 93.5 L517.5 94.9 L516.9 96.2 L516.2 97.6 L515.6 99 L515 100.3 L514.3 101.7 L513.7 103 L513.1 104.4 L512.4 105.8 L511.8 107.2 L511.1 108.5 L510.5 109.9 L509.9 111.3 L509.3 112.7 L508.7 114.1 L508.1 115.5 L507.5 116.8 L507 118.2 L506.4 119.6 L505.9 121 L505.4 122.4 L504.9 123.8 L504.3 125.2 L503.9 126.7 L503.4 128.1 L502.9 129.5 L502.5 130.9 L502.1 132.4 L501.7 133.8 L501.2 135.2 L500.9 136.7 L500.5 138.1 L500.1 139.6 L499.7 141 L499.4 142.5 L499.1 143.9 L498.7 145.4 L498.4 146.8 L498.1 148.3 L497.7 149.8 L497.4 151.2 L497.1 152.7 L496.8 154.2 L496.5 155.7 L496.2 157.2 L495.9 158.7 L495.5 160.2 L495.2 161.7 L495 163.2 L494.7 164.7 L494.4 166.2 L494.1 167.7 L493.8 169.2 L493.5 170.7 L493.2 172.2 L492.9 173.7 L492.6 175.2 L492.3 176.7 L492 178.2 L491.7 179.6 L491.4 181.1 L491.1 182.6 L490.8 184.1 L490.5 185.6 L490.2 187.1 L489.8 188.6 L489.5 190.1 L489.2 191.6 L488.9 193.1 L488.6 194.6 L488.3 196.1 L488 197.5 L487.7 199 L487.4 200.5 L487.1 202 L486.8 203.5 L486.5 204.9 L486.2 206.4 L485.9 207.9 L485.5 209.3 L485.2 210.8 L484.9 212.3 L484.6 213.7 L484.3 215.2 L484 216.6 L483.6 218.1 L483.3 219.5 L483 221 L482.7 222.5 L482.4 223.9 L482 225.4 L481.7 226.8 L481.4 228.3 L481.1 229.7 L480.8 231.2 L480.5 232.6 L480.2 234.1 L479.8 235.6 L479.5 237 L479.2 238.5 L478.9 239.9 L478.6 241.4 L478.3 242.9 L478 244.3 L477.8 245.8 L477.5 247.3 L477.2 248.7 L476.9 250.2 L476.6 251.7 L476.3 253.1 L476 254.6 L475.7 256 L475.4 257.5 L475.1 259 L474.8 260.4 L474.6 261.9 L474.3 263.4 L474 264.8 L473.7 266.3 L473.4 267.8 L473.1 269.2 L472.8 270.7 L472.5 272.2 L472.2 273.6 L471.9 275.1 L471.7 276.6 L471.4 278 L471.1 279.5 L470.8 281 L470.5 282.4 L470.2 283.9 L469.9 285.3 L469.6 286.8 L469.3 288.3 L469 289.7 L468.7 291.2 L468.5 292.7 L468.2 294.1 L467.9 295.6 L467.6 297.1 L467.3 298.5 L467 300 L466.7 301.4 L466.4 302.9 L466.2 304.4 L465.9 305.8 L465.6 307.3 L465.3 308.7 L465 310.2 L464.7 311.7 L464.4 313.1 L464.2 314.6 L463.9 316 L463.6 317.5 L463.3 318.9 L463 320.4 L462.7 321.9 L462.5 323.3 L462.2 324.8 L461.9 326.2 L461.6 327.7 L461.3 329.1 L461 330.6 L460.8 332 L460.5 333.5 L460.2 335 L459.9 336.4 L459.6 337.9 L459.3 339.3 L459.1 340.8 L458.8 342.2 L458.5 343.7 L458.2 345.2 L457.9 346.6 L457.6 348.1 L457.3 349.5 L457.1 351 L456.8 352.4 L456.5 353.9 L456.2 355.4 L455.9 356.8 L455.6 358.3 L455.3 359.7 L455 361.2 L454.7 362.7 L454.4 364.1 L454.1 365.6 L453.8 367 L453.5 368.5 L453.2 370 L452.8 371.4 L452.5 372.9 L452.2 374.4 L451.9 375.8 L451.6 377.3 L451.3 378.7 L451 380.2 L450.7 381.6 L450.4 383.1 L450 384.5 L449.7 386 L449.3 387.4 L448.9 388.8 L448.5 390.2 L448.1 391.6 L447.7 393 L447.4 394.5 L447 395.9 L446.6 397.3 L446.2 398.7 L445.8 400.2 L445.4 401.6 L445.1 403.1 L444.7 404.5 L444.4 406 L444.1 407.4 L443.8 408.9 L443.5 410.4 L443.2 411.9 L442.8 413.4 L442.5 414.9 L442.2 416.4 L441.9 417.9 L441.6 419.3 L441.2 420.8 L440.9 422.3 L440.5 423.7 L440.1 425.2 L439.7 426.6 L439.3 428 L438.9 429.5 L438.5 430.9 L438 432.3 L437.6 433.7 L437.1 435.1 L436.6 436.5 L436.1 437.9 L435.7 439.3 L435.2 440.7 L434.7 442.1 L434.1 443.5 L433.6 444.8 L433.1 446.2 L432.5 447.6 L432 449 L431.4 450.3 L430.8 451.7 L430.2 453 L429.6 454.4 L429 455.7 L428.4 457.1 L427.8 458.4 L427.1 459.8 L426.5 461.1 L425.8 462.4 L425.1 463.7 L424.4 465 L423.6 466.3 L422.9 467.5 L422.1 468.8 L421.2 470 L420.4 471.3 L419.5 472.5 L418.7 473.7 L417.8 474.9 L416.8 476.1 L415.9 477.3 L415 478.5 L414.1 479.7 L413.1 480.9 L412.2 482 L411.2 483.2 L410.3 484.4 L409.3 485.6 L408.3 486.7 L407.4 487.9 L406.4 489 L405.4 490.2 L404.4 491.3 L403.3 492.5 L402.3 493.6 L401.3 494.8 L400.3 495.9 L399.3 497 L398.2 498.1 L397.2 499.1 L396.1 500.2 L395 501.3 L394 502.3 L392.9 503.3 L391.8 504.3 L390.7 505.3 L389.6 506.3 L388.5 507.3 L387.3 508.2 L386.2 509.2 L385.1 510.2 L384 511.1 L382.8 512.1 L381.7 513 L380.5 514 L379.3 514.9 L378.2 515.8 L377 516.8 L375.8 517.7 L374.6 518.6 L373.4 519.5 L372.2 520.4 L371 521.3 L369.8 522.2 L368.5 523.2 L367.3 524.1 L366.1 525 L364.9 525.9 L363.7 526.8 L362.4 527.7 L361.2 528.5 L360 529.4 L358.8 530.3 L357.5 531.2 L356.3 532.1 L355.1 532.9 L353.9 533.8 L352.7 534.7 L351.4 535.5 L350.2 536.4 L349 537.3 L347.8 538.1 L346.5 539 L345.3 539.9 L344.1 540.7 L342.9 541.6 L341.6 542.4 L340.4 543.3 L339.2 544.2 L338 545 L336.7 545.9 L335.5 546.8 L334.3 547.6 L333.1 548.5 L331.8 549.4 L330.6 550.2 L329.4 551.1 L328.2 551.9 L326.9 552.8 L325.7 553.7 L324.5 554.5 L323.3 555.4 L322 556.3 L320.8 557.1 L319.6 558 L318.4 558.9 L317.1 559.7 L315.9 560.6 L314.7 561.4 L313.5 562.3 L312.2 563.2 L311 564 L309.8 564.9 L308.6 565.8 L307.3 566.6 L306.1 567.5 L304.9 568.3 L303.7 569.2 L302.5 570.1 L301.2 570.9 L300 571.8 L298.8 572.7 L297.6 573.6 L296.3 574.4 L295.1 575.3 L293.9 576.2 L292.7 577 L291.5 577.9 L290.2 578.8 L289 579.7 L287.8 580.5 L286.6 581.4 L285.4 582.3 L284.1 583.2 L282.9 584 L281.7 584.9 L280.5 585.8 L279.3 586.6 L278 587.5 L276.8 588.4 L275.6 589.3 L274.4 590.1 L273.2 591 L272 591.9 L270.7 592.8 L269.5 593.6 L268.3 594.5 L267.1 595.4 L265.9 596.2 L264.6 597.1 L263.4 598 L262.2 598.9 L261 599.7 L259.8 600.6 L258.5 601.5 L257.3 602.4 L256.1 603.2 L254.9 604.1 L253.7 605 L252.5 605.9 L251.2 606.7 L250 607.6 L248.8 608.5 L247.6 609.4 L246.4 610.3 L245.2 611.1 L244 612 L242.8 612.9 L241.6 613.8 L240.4 614.7 L239.2 615.5 L238 616.4 L236.7 617.3 L235.5 618.2 L234.3 619.1 L233.1 620 L231.9 620.8 L230.7 621.7 L229.5 622.6 L228.3 623.5 L227.1 624.4 L225.9 625.3 L224.7 626.1 L223.5 627 L222.3 627.9 L221.1 628.8 L219.9 629.7 L218.7 630.6 L217.5 631.4 L216.3 632.3 L215.1 633.2 L213.9 634.1 L212.7 635 L211.5 635.9 L210.2 636.7 L209 637.6 L207.8 638.5 L206.6 639.4 L205.4 640.3 L204.2 641.2 L203 642 L201.8 642.9 L200.6 643.8 L199.4 644.7 L198.2 645.6 L197 646.5 L195.8 647.3 L194.6 648.2 L193.4 649.1 L192.2 650 L191 650.9 L189.8 651.8 L188.6 652.6 L187.4 653.5 L186.2 654.4 L185 655.3 L183.7 656.2 L182.5 657.1 L181.3 657.9 L180.1 658.8 L178.9 659.7 L177.7 660.6 L176.5 661.5 L175.3 662.4 L174.1 663.3 L172.9 664.1 L171.6 665 L170.4 665.9 L169.2 666.8 L167.9 667.7 L166.7 668.6 L165.5 669.5 L164.2 670.5 L163 671.4 L161.7 672.3 L160.5 673.2 L159.2 674.1 L158 675"/>
<path stroke="#ff4000" d="M619.4 103 L618.4 104.1 L617.5 105.3 L616.5 106.4 L615.6 107.6 L614.6 108.7 L613.6 109.9 L612.7 111 L611.7 112.2 L610.7 113.3 L609.8 114.4 L608.8 115.6 L607.9 116.7 L606.9 117.9 L606 119 L605 120.2 L604.1 121.4 L603.1 122.6 L602.2 123.7 L601.3 124.9 L600.3 126.1 L599.4 127.3 L598.5 128.6 L597.6 129.8 L596.7 131 L595.8 132.2 L594.9 133.5 L594 134.7 L593.1 135.9 L592.2 137.2 L591.4 138.4 L590.5 139.7 L589.7 140.9 L588.8 142.2 L588 143.5 L587.2 144.8 L586.4 146 L585.6 147.3 L584.8 148.6 L584 149.9 L583.3 151.2 L582.6 152.5 L581.8 153.8 L581.1 155.1 L580.4 156.4 L579.7 157.7 L579 159 L578.4 160.3 L577.7 161.7 L577.1 163 L576.4 164.3 L575.8 165.6 L575.2 166.9 L574.5 168.2 L573.9 169.5 L573.3 170.8 L572.6 172.2 L572 173.5 L571.4 174.8 L570.8 176.1 L570.1 177.4 L569.5 178.7 L568.9 180.1 L568.3 181.4 L567.7 182.7 L567.1 184 L566.5 185.4 L565.9 186.7 L565.3 188 L564.6 189.4 L564 190.7 L563.4 192 L562.8 193.4 L562.3 194.7 L561.7 196 L561.1 197.4 L560.5 198.7 L560 200.1 L559.5 201.5 L558.9 202.8 L558.4 204.2 L557.9 205.6 L557.4 206.9 L556.9 208.3 L556.4 209.7 L555.9 211.1 L555.4 212.5 L555 213.9 L554.5 215.3 L554 216.7 L553.5 218.1 L553.1 219.6 L552.6 221 L552.1 222.4 L551.7 223.9 L551.2 225.4 L550.7 226.8 L550.3 228.3 L549.8 229.8 L549.4 231.3 L548.9 232.8 L548.5 234.2 L548.1 235.7 L547.7 237.2 L547.3 238.7 L546.9 240.1 L546.5 241.6 L546.2 243.1 L545.8 244.5 L545.4 246 L545.1 247.5 L544.8 248.9 L544.4 250.4 L544.1 251.8 L543.8 253.3 L543.4 254.8 L543.1 256.2 L542.8 257.7 L542.5 259.2 L542.2 260.6 L541.9 262.1 L541.6 263.6 L541.3 265 L541.1 266.5 L540.8 268 L540.5 269.5 L540.3 270.9 L540 272.4 L539.7 273.9 L539.5 275.3 L539.2 276.8 L539 278.3 L538.7 279.8 L538.5 281.2 L538.2 282.7 L538 284.2 L537.7 285.7 L537.5 287.1 L537.3 288.6 L537 290.1 L536.8 291.5 L536.6 293 L536.4 294.5 L536.1 295.9 L535.9 297.4 L535.7 298.9 L535.5 300.3 L535.3 301.8 L535.1 303.3 L534.8 304.7 L534.6 306.2 L534.4 307.7 L534.2 309.1 L533.9 310.6 L533.7 312.1 L533.5 313.5 L533.2 315 L533 316.5 L532.8 318 L532.5 319.4 L532.3 320.9 L532 322.4 L531.8 323.9 L531.5 325.3 L531.2 326.8 L531 328.3 L530.7 329.8 L530.5 331.2 L530.2 332.7 L530 334.2 L529.7 335.7 L529.4 337.1 L529.2 338.6 L528.9 340.1 L528.7 341.6 L528.4 343 L528.2 344.5 L527.9 346 L527.6 347.5 L527.4 348.9 L527.1 350.4 L526.9 351.9 L526.6 353.4 L526.4 354.8 L526.1 356.3 L525.8 357.8 L525.6 359.3 L525.3 360.7 L525.1 362.2 L524.8 363.7 L524.6 365.2 L524.3 366.6 L524 368.1 L523.8 369.6 L523.5 371.1 L523.3 372.5 L523 374 L522.8 375.5 L522.5 377 L522.2 378.4 L522 379.9 L521.7 381.4 L521.5 382.9 L521.2 384.3 L521 385.8 L520.7 387.3 L520.4 388.8 L520.2 390.2 L519.9 391.7 L519.7 393.2 L519.4 394.6 L519.2 396.1 L518.9 397.6 L518.6 399 L518.4 400.5 L518.1 402 L517.9 403.4 L517.6 404.9 L517.4 406.3 L517.1 407.8 L516.9 409.3 L516.6 410.7 L516.3 412.2 L516.1 413.7 L515.8 415.1 L515.6 416.6 L515.3 418.1 L515.1 419.5 L514.8 421 L514.5 422.5 L514.3 423.9 L514 425.4 L513.8 426.9 L513.5 428.3 L513.3 429.8 L513 431.3 L512.7 432.7 L512.5 434.2 L512.2 435.7 L512 437.1 L511.7 438.6 L511.5 440 L511.2 441.5 L511 443 L510.7 444.4 L510.4 445.9 L510.2 447.4 L509.9 448.8 L509.7 450.3 L509.4 451.8 L509.2 453.3 L508.9 454.7 L508.6 456.2 L508.4 457.7 L508.1 459.1 L507.9 460.6 L507.6 462.1 L507.3 463.6 L507.1 465.1 L506.8 466.5 L506.5 468 L506.3 469.5 L506 471 L505.8 472.5 L505.5 473.9 L505.2 475.4 L505 476.9 L504.7 478.4 L504.5 479.9 L504.2 481.4 L503.9 482.8 L503.7 484.3 L503.4 485.8 L503.2 487.3 L502.9 488.8 L502.6 490.2 L502.4 491.7 L502.1 493.2 L501.8 494.7 L501.5 496.1 L501.2 497.6 L500.9 499.1 L500.6 500.5 L500.2 502 L499.9 503.4 L499.5 504.9 L499.2 506.3 L498.8 507.7 L498.4 509.2 L498 510.6 L497.6 512 L497.2 513.4 L496.8 514.9 L496.4 516.3 L496 517.7 L495.6 519.2 L495.2 520.6 L494.8 522 L494.4 523.4 L494 524.9 L493.6 526.3 L493.2 527.8 L492.7 529.2 L492.3 530.7 L491.8 532.1 L491.4 533.6 L490.9 535 L490.5 536.5 L490 538 L489.5 539.5 L489 541 L488.5 542.5 M619.4 103 L631.8 114"/>
<path stroke="#ff4000" d="M660 82 L659 83.1 L658.1 84.3 L657.1 85.4 L656.1 86.5 L655.2 87.6 L654.2 88.8 L653.2 89.9 L652.3 91 L651.3 92.1 L650.3 93.3 L649.3 94.4 L648.4 95.5 L647.4 96.6 L646.4 97.8 L645.5 98.9 L644.5 100 L643.6 101.1 L642.6 102.2 L641.7 103.3 L640.7 104.4 L639.8 105.6 L638.9 106.7 L637.9 107.8 L637 108.9 L636.1 110 L635.1 111.1 L634.2 112.2 L633.2 113.3 L632.3 114.4 L631.3 115.5 L630.4 116.6 L629.4 117.7 L628.4 118.9 L627.5 120 L626.5 121.1 L625.5 122.3 L624.5 123.4 L623.5 124.6 L622.5 125.7 L621.5 126.9 L620.5 128 L619.6 129.2 L618.6 130.3 L617.6 131.5 L616.7 132.7 L615.7 133.8 L614.8 135 L613.9 136.2 L612.9 137.4 L612 138.7 L611.1 139.9 L610.2 141.1 L609.3 142.3 L608.4 143.6 L607.5 144.8 L606.6 146 L605.7 147.3 L604.9 148.5 L604 149.7 L603.1 151 L602.3 152.2 L601.4 153.4 L600.6 154.7 L599.8 155.9 L599 157.1 L598.2 158.4 L597.4 159.6 L596.6 160.8 L595.8 162.1 L595 163.3 L594.2 164.5 L593.5 165.8 L592.7 167.1 L592 168.3 L591.2 169.6 L590.5 170.9 L589.8 172.2 L589 173.5 L588.3 174.8 L587.6 176.1 L586.9 177.4 L586.3 178.8 L585.6 180.1 L584.9 181.5 L584.2 182.8 L583.6 184.2 L583 185.6 L582.3 186.9 L581.8 188.3 L581.2 189.7 L580.6 191.2 L580.1 192.6 L579.6 194 L579 195.5 L578.5 196.9 L578 198.4 L577.5 199.8 L577 201.3 L576.5 202.7 L575.9 204.1 L575.4 205.6 L574.8 207 L574.3 208.4 L573.7 209.8 L573.1 211.2 L572.6 212.6 L572 214 L571.5 215.4 L571 216.8 L570.5 218.2 L570 219.6 L569.5 221 L569.1 222.3 L568.6 223.7 L568.2 225.1 L567.8 226.5 L567.3 227.9 L566.9 229.3 L566.5 230.7 L566.1 232.1 L565.7 233.5 L565.3 234.9 L564.9 236.4 L564.5 237.8 L564.1 239.3 L563.8 240.8 L563.4 242.2 L563 243.7 L562.7 245.2 L562.3 246.7 L561.9 248.2 L561.6 249.7 L561.2 251.2 L560.9 252.7 L560.6 254.2 L560.2 255.7 L559.9 257.1 L559.6 258.6 L559.3 260.1 L559 261.6 L558.7 263 L558.4 264.5 L558.1 266 L557.8 267.4 L557.6 268.9 L557.3 270.3 L557 271.8 L556.7 273.3 L556.5 274.7 L556.2 276.2 L556 277.7 L555.7 279.2 L555.5 280.6 L555.2 282.1 L555 283.6 L554.8 285.1 L554.5 286.6 L554.3 288.1 L554.1 289.6 L553.9 291.1 L553.7 292.6 L553.5 294.1 L553.3 295.6 L553 297.1 L552.8 298.5 L552.6 300 L552.4 301.5 L552.2 303 L552 304.5 L551.8 306 L551.6 307.5 L551.3 309 L551.1 310.5 L550.9 312 L550.7 313.5 L550.4 315 L550.2 316.4 L549.9 317.9 L549.7 319.4 L549.4 320.9 L549.2 322.4 L548.9 323.8 L548.7 325.3 L548.4 326.8 L548.2 328.2 L547.9 329.7 L547.6 331.2 L547.4 332.7 L547.1 334.1 L546.8 335.6 L546.6 337.1 L546.3 338.5 L546.1 340 L545.8 341.5 L545.5 343 L545.3 344.4 L545 345.9 L544.8 347.4 L544.5 348.8 L544.2 350.3 L544 351.8 L543.7 353.3 L543.5 354.7 L543.2 356.2 L542.9 357.7 L542.7 359.1 L542.4 360.6 L542.2 362.1 L541.9 363.6 L541.6 365 L541.4 366.5 L541.1 368 L540.9 369.4 L540.6 370.9 L540.3 372.4 L540.1 373.9 L539.8 375.3 L539.5 376.8 L539.3 378.3 L539 379.7 L538.8 381.2 L538.5 382.7 L538.2 384.2 L538 385.6 L537.7 387.1 L537.5 388.6 L537.2 390 L536.9 391.5 L536.7 393 L536.4 394.5 L536.1 395.9 L535.9 397.4 L535.6 398.9 L535.4 400.4 L535.1 401.9 L534.8 403.3 L534.5 404.8 L534.3 406.3 L534 407.8 L533.7 409.3 L533.5 410.7 L533.2 412.2 L532.9 413.7 L532.7 415.2 L532.4 416.7 L532.1 418.1 L531.8 419.6 L531.6 421.1 L531.3 422.6 L531 424.1 L530.8 425.6 L530.5 427 L530.2 428.5 L530 430 L529.7 431.5 L529.4 433 L529.1 434.4 L528.9 435.9 L528.6 437.4 L528.3 438.9 L528.1 440.4 L527.8 441.9 L527.5 443.3 L527.3 444.8 L527 446.3 L526.7 447.8 L526.5 449.3 L526.2 450.8 L525.9 452.2 L525.6 453.7 L525.4 455.2 L525.1 456.7 L524.8 458.2 L524.6 459.6 L524.3 461.1 L524 462.6 L523.8 464.1 L523.5 465.6 L523.2 467.1 L522.9 468.5 L522.7 470 L522.4 471.5 L522.1 473 L521.9 474.5 L521.6 476 L521.3 477.5 L521.1 479 L520.8 480.5 L520.5 481.9 L520.3 483.4 L520 484.9 L519.7 486.4 L519.5 487.9 L519.2 489.4 L518.9 490.9 L518.7 492.4 L518.4 493.9 L518.1 495.4 L517.9 496.9 L517.6 498.3 L517.3 499.8 L517.1 501.3 L516.8 502.8 L516.5 504.3 L516.2 505.8 L515.9 507.3 L515.7 508.8 L515.4 510.2 L515.1 511.7 L514.8 513.2 L514.5 514.7 L514.2 516.1 L513.9 517.6 L513.6 519.1 L513.3 520.6 L513 522 L512.7 523.5 L512.4 525 L512.1 526.4 L511.8 527.9 L511.4 529.4 L511.1 530.9 L510.8 532.3 L510.5 533.8 L510.2 535.3 L509.9 536.7 L509.6 538.2 L509.3 539.7 L509 541.2 L508.7 542.6 L508.4 544.1 L508 545.6 L507.7 547.1 L507.3 548.6 L507 550.1 L506.6 551.6 L506.3 553.1 L505.8 554.7 L505.4 556.2 L504.9 557.8"/>
<path stroke="#ff00ff" d="M488.5 542.5 L319 665.6 L305 675.8 M504.9 557.8 L357 665.6 L343 675.8"/>
<path stroke="#0000ff" d="M693.2 80 L692.6 81.3 L692 82.7 L691.4 84 L690.8 85.3 L690.2 86.7 L689.6 88 L689 89.3 L688.4 90.7 L687.8 92 L687.2 93.4 L686.6 94.7 L686 96 L685.4 97.4 L684.8 98.7 L684.2 100.1 L683.6 101.4 L683 102.7 L682.4 104.1 L681.8 105.4 L681.2 106.8 L680.5 108.2 L679.9 109.5 L679.3 110.9 L678.7 112.2 L678.1 113.6 L677.5 115 L676.9 116.3 L676.3 117.7 L675.6 119 L675 120.4 L674.4 121.8 L673.8 123.1 L673.2 124.5 L672.6 125.9 L672 127.2 L671.3 128.6 L670.7 129.9 L670.1 131.3 L669.5 132.7 L668.9 134 L668.3 135.4 L667.7 136.8 L667.1 138.1 L666.4 139.5 L665.8 140.8 L665.2 142.2 L664.6 143.6 L664 144.9 L663.4 146.3 L662.8 147.7 L662.1 149 L661.5 150.4 L660.9 151.7 L660.3 153.1 L659.7 154.5 L659.1 155.8 L658.5 157.2 L657.8 158.6 L657.2 159.9 L656.6 161.3 L656 162.7 L655.4 164 L654.7 165.4 L654.1 166.8 L653.5 168.2 L652.9 169.5 L652.2 170.9 L651.6 172.3 L651 173.7 L650.3 175.1 L649.7 176.5 L649.1 177.8 L648.4 179.2 L647.8 180.6 L647.2 182 L646.5 183.4 L645.9 184.8 L645.2 186.2 L644.6 187.5 L644 188.9 L643.3 190.3 L642.7 191.7 L642.1 193.1 L641.4 194.5 L640.8 195.8 L640.2 197.2 L639.5 198.6 L638.9 200 L638.3 201.4 L637.7 202.8 L637 204.2 L636.4 205.6 L635.8 207 L635.2 208.3 L634.5 209.7 L633.9 211.1 L633.3 212.5 L632.7 213.9 L632.1 215.3 L631.4 216.7 L630.8 218.1 L630.2 219.5 L629.6 220.9 L629 222.3 L628.3 223.7 L627.7 225 L627.1 226.4 L626.5 227.8 L626 229.2 L625.4 230.6 L624.9 232 L624.3 233.4 L623.8 234.8 L623.3 236.2 L622.8 237.6 L622.3 239 L621.8 240.4 L621.3 241.8 L620.9 243.2 L620.4 244.6 L619.9 246 L619.5 247.4 L619 248.8 L618.5 250.2 L618.1 251.6 L617.6 253 L617.1 254.4 L616.7 255.8 L616.2 257.2 L615.8 258.6 L615.3 260.1 L614.9 261.5 L614.4 262.9 L614 264.3 L613.5 265.7 L613.1 267.1 L612.6 268.6 L612.2 270 L611.7 271.4 L611.3 272.8 L610.8 274.3 L610.4 275.7 L609.9 277.1 L609.5 278.5 L609.1 280 L608.6 281.4 L608.2 282.8 L607.8 284.3 L607.4 285.7 L606.9 287.2 L606.5 288.6 L606.1 290.1 L605.7 291.5 L605.3 293 L604.9 294.5 L604.5 295.9 L604.1 297.4 L603.7 298.9 L603.3 300.3 L602.9 301.8 L602.5 303.3 L602.1 304.7 L601.7 306.2 L601.3 307.7 L600.9 309.1 L600.5 310.6 L600.1 312.1 L599.7 313.5 L599.3 315 L598.9 316.4 L598.4 317.9 L598 319.3 L597.6 320.8 L597.2 322.2 L596.8 323.7 L596.4 325.1 L596 326.6 L595.5 328 L595.1 329.5 L594.7 330.9 L594.3 332.4 L593.9 333.8 L593.4 335.3 L593 336.7 L592.6 338.1 L592.2 339.6 L591.8 341 L591.3 342.5 L590.9 343.9 L590.5 345.4 L590.1 346.8 L589.7 348.3 L589.3 349.7 L588.8 351.2 L588.4 352.6 L588 354.1 L587.6 355.5 L587.2 356.9 L586.7 358.4 L586.3 359.8 L585.9 361.3 L585.5 362.7 L585.1 364.2 L584.6 365.6 L584.2 367.1 L583.8 368.5 L583.4 370 L583 371.4 L582.6 372.9 L582.1 374.3 L581.7 375.8 L581.3 377.2 L580.9 378.6 L580.5 380.1 L580.1 381.5 L579.7 383 L579.2 384.4 L578.8 385.9 L578.4 387.3 L578 388.8 L577.6 390.2 L577.2 391.6 L576.8 393.1 L576.4 394.5 L575.9 396 L575.5 397.4 L575.1 398.9 L574.7 400.3 L574.3 401.8 L573.9 403.2 L573.5 404.7 L573.1 406.1 L572.6 407.5 L572.2 409 L571.8 410.4 L571.4 411.9 L571 413.3 L570.6 414.8 L570.2 416.2 L569.8 417.7 L569.3 419.1 L568.9 420.5 L568.5 422 L568.1 423.4 L567.7 424.9 L567.3 426.3 L566.9 427.8 L566.5 429.2 L566 430.7 L565.6 432.1 L565.2 433.6 L564.8 435 L564.4 436.4 L564 437.9 L563.6 439.3 L563.2 440.8 L562.8 442.2 L562.3 443.7 L561.9 445.1 L561.5 446.6 L561.1 448 L560.7 449.5 L560.3 450.9 L559.9 452.4 L559.5 453.8 L559.1 455.3 L558.7 456.7 L558.3 458.2 L557.9 459.7 L557.5 461.1 L557.1 462.6 L556.7 464 L556.3 465.5 L555.9 466.9 L555.6 468.4 L555.2 469.9 L554.8 471.3 L554.4 472.8 L554 474.2 L553.6 475.7 L553.2 477.1 L552.8 478.6 L552.4 480.1 L552 481.5 L551.6 483 L551.2 484.4 L550.8 485.9 L550.4 487.3 L550 488.7 L549.6 490.2 L549.2 491.6 L548.8 493 L548.4 494.4 L548 495.9 L547.6 497.3 L547.1 498.7 L546.7 500.1 L546.3 501.5 L545.9 502.9 L545.5 504.4 L545 505.8 L544.6 507.2 L544.2 508.6 L543.7 510 L543.2 511.4 L542.8 512.8 L542.3 514.2 L541.8 515.6 L541.3 517.1 L540.8 518.5 L540.3 519.9 L539.8 521.3 L539.3 522.7 L538.8 524.1 L538.3 525.5 L537.8 526.9 L537.3 528.3 L536.8 529.7 L536.3 531.1 L535.8 532.5 L535.3 533.9 L534.8 535.3 L534.2 536.7 L533.7 538.1 L533.1 539.4 L532.5 540.8 L531.9 542.1 L531.3 543.5 L530.7 544.8 L530 546.1 L529.4 547.4 L528.7 548.7 L527.9 550 L527.2 551.3 L526.5 552.6 L525.8 553.9 L525 555.2 L524.3 556.6 L523.5 557.9 L522.7 559.2 L522 560.5 L521.2 561.8 L520.4 563.1 L519.7 564.4 L518.9 565.7 L518.1 567 L517.4 568.3 L516.6 569.7 L515.9 571 L515.1 572.3 L514.3 573.6 L513.6 574.9 L512.8 576.2 L512 577.5 L511.3 578.8 L510.5 580.1 L509.7 581.4 L508.9 582.7 L508.1 584 L507.3 585.2 L506.4 586.5 L505.5 587.7 L504.6 588.9 L503.7 590.1 L502.8 591.3 L501.9 592.5 L500.9 593.6 L499.9 594.8 L498.9 595.9 L497.9 597 L496.9 598.2 L495.9 599.3 L494.9 600.4 L493.9 601.6 L492.9 602.7 L492 603.8 L491 604.9 L490 606.1 L489 607.2 L488 608.3 L487 609.5 L486 610.6 L485 611.7 L484 612.8 L483 613.9 L481.9 615 L480.9 616.1 L479.8 617.2 L478.8 618.3 L477.7 619.3 L476.7 620.3 L475.6 621.4 L474.5 622.4 L473.4 623.4 L472.2 624.4 L471.1 625.4 L470 626.3 L468.9 627.3 L467.8 628.3 L466.6 629.3 L465.5 630.2 L464.4 631.2 L463.2 632.2 L462.1 633.2 L461 634.2 L459.9 635.1 L458.8 636.1 L457.6 637.1 L456.5 638.1 L455.4 639 L454.2 640 L453.1 640.9 L451.9 641.9 L450.8 642.8 L449.6 643.8 L448.5 644.7 L447.3 645.6 L446.2 646.5 L445 647.4 L443.8 648.4 L442.7 649.3 L441.5 650.2 L440.3 651.1 L439.2 652 L438 652.9 L436.9 653.8 L435.7 654.7 L434.5 655.6 L433.4 656.5 L432.2 657.4 L431 658.3 L429.9 659.2 L428.7 660.2 L427.5 661.1 L426.3 662 L425.2 662.9 L424 663.8 L422.8 664.7 L421.6 665.7 L420.4 666.6 L419.1 667.5 L417.9 668.5 L416.7 669.4 L415.5 670.3 L414.2 671.3 L413 672.2 L411.7 673.2 L410.5 674.1 L409.2 675.1 L408 676"/>
<path stroke="#ff4000" d="M675.8 133.7 L804.8 195.3 M637.1 228 L771.1 275.8 M567.8 464.1 L704.9 502.8 M478.3 635.3 L520 669"/>
<path stroke="#ff00ff" d="M41 102 L3 142"/>
<path stroke="#00e6e6" d="M171 102 L3 277.6"/>
<path stroke="#40ff00" d="M250.3 102 L3 362.3"/>
<path stroke="#ff00ff" d="M289 102 L238.3 155.1 M82.5 319.4 L3 401.7 M169.1 227.1 L153.8 244.6"/>
<path stroke="#40ff00" d="M64.8 127.7 L48.8 145.1"/>
<defs><pattern id="hp" patternUnits="userSpaceOnUse" x="0" y="0" width="2" height="2"><rect x="0" y="0" width="1" height="1" fill="#b4b4b4"/><rect x="1" y="1" width="1" height="1" fill="#b4b4b4"/></pattern></defs>
<path fill="url(#hp)" stroke="none" d="M80.7 111 L64.8 127.7 L54.2 117.6 L70 100.9 Z"/>
<path fill="url(#hp)" stroke="none" d="M48.5 144.8 L32.7 161.5 L22 151.3 L37.9 134.7 Z"/>
<path fill="url(#hp)" stroke="none" d="M24.7 169.8 L8.9 186.4 L-1.8 176.3 L14.1 159.7 Z"/>
<path fill="url(#hp)" stroke="none" d="M187 212.5 L171 229.1 L180.1 237.8 L196.1 221.2 Z"/>
<path fill="url(#hp)" stroke="none" d="M210.9 187.6 L194.9 204.2 L204 212.9 L220 196.3 Z"/>
<path fill="url(#hp)" stroke="none" d="M231 166.7 L218.8 179.3 L227.9 188 L240.1 175.4 Z"/>
<path fill="url(#hp)" stroke="none" d="M155 245.8 L139 262.4 L148.1 271.1 L164 254.5 Z"/>
<path fill="url(#hp)" stroke="none" d="M131 270.7 L115.1 287.2 L124.2 296 L140.1 279.4 Z"/>
<path fill="url(#hp)" stroke="none" d="M107.1 295.5 L91.2 312.1 L100.3 320.9 L116.2 304.3 Z"/>
<path stroke="#d0d0d0" d="M84.3 84.1 L-15.7 189.2 M82.5 82.4 L-17.5 187.5 M96 95.2 L64.9 127.8 M48.7 144.9 L-4 200.3 M97.7 96.9 L66.7 129.5 M50.4 146.6 L-2.3 201.9 M80.7 111 L64.8 127.7 M64.8 127.7 L54.2 117.6 M54.2 117.6 L70 100.9 M70 100.9 L80.7 111 M77.3 109.2 L62.8 124.4 M74.6 106.7 L60.2 121.9 M72 104.2 L57.5 119.4 M48.5 144.8 L32.7 161.5 M32.7 161.5 L22 151.3 M22 151.3 L37.9 134.7 M37.9 134.7 L48.5 144.8 M45.2 143 L30.7 158.2 M42.5 140.5 L28 155.7 M39.9 137.9 L25.4 153.1 M24.7 169.8 L8.9 186.4 M8.9 186.4 L-1.8 176.3 M-1.8 176.3 L14.1 159.7 M14.1 159.7 L24.7 169.8 M21.4 168 L6.9 183.2 M18.7 165.4 L4.3 180.7 M16.1 162.9 L1.6 178.1 M249.6 165.8 L92.6 329.1 M251.2 167.4 L94.3 330.7 M238.6 155.3 L169.3 227.4 M153.2 244.1 L81.6 318.6 M240.3 157 L171 229.1 M155 245.8 L83.4 320.3 M238.6 155.3 L251.2 167.4 M81.6 318.6 L94.3 330.7 M187 212.5 L171 229.1 M171 229.1 L180.1 237.8 M180.1 237.8 L196.1 221.2 M196.1 221.2 L187 212.5 M188.5 215.4 L174 230.5 M190.8 217.6 L176.3 232.7 M193.1 219.8 L178.5 234.9 M210.9 187.6 L194.9 204.2 M194.9 204.2 L204 212.9 M204 212.9 L220 196.3 M220 196.3 L210.9 187.6 M212.5 190.5 L197.9 205.7 M214.7 192.7 L200.2 207.8 M217 194.9 L202.4 210 M231 166.7 L218.8 179.3 M218.8 179.3 L227.9 188 M227.9 188 L240.1 175.4 M240.1 175.4 L231 166.7 M232.6 169.6 L221.8 180.8 M234.8 171.8 L224.1 183 M237.1 174 L226.4 185.1 M155 245.8 L139 262.4 M139 262.4 L148.1 271.1 M148.1 271.1 L164 254.5 M164 254.5 L155 245.8 M156.5 248.7 L142 263.8 M158.8 250.9 L144.2 266 M161.1 253.1 L146.5 268.2 M131 270.7 L115.1 287.2 M115.1 287.2 L124.2 296 M124.2 296 L140.1 279.4 M140.1 279.4 L131 270.7 M132.6 273.6 L118.1 288.7 M134.9 275.8 L120.3 290.9 M137.2 277.9 L122.6 293.1 M107.1 295.5 L91.2 312.1 M91.2 312.1 L100.3 320.9 M100.3 320.9 L116.2 304.3 M116.2 304.3 L107.1 295.5 M108.7 298.4 L94.2 313.6 M111 300.6 L96.4 315.8 M113.3 302.8 L98.7 318"/>
<path stroke="#d0d0d0" d="M64.8 127.7 L169.3 227.2 M66.1 126.3 L170.6 225.8 M48.5 144.8 L153.1 244.3 M47.2 146.2 L151.8 245.7"/>
<g stroke="#87cefa"><path d="M62.9 142.5 L96.6 134.8 M62.9 142.5 L101.3 139.1"/><g transform="translate(101.35 133.95) rotate(43.6)"><rect x="-15.4" y="-4.3" width="30.8" height="8.6" fill="#000"/></g></g>
<text transform="translate(101.35 133.95) rotate(43.6)" x="0" y="2.5" font-family="Liberation Sans, sans-serif" font-size="7" font-weight="bold" text-anchor="middle" fill="#87cefa" stroke="none" textLength="25" lengthAdjust="spacingAndGlyphs">SJP-N4</text>
<g stroke="#e8e8e8"><path d="M140.8 179.3 L159.7 197.3 L149.3 207.7 L131.8 189.3 Z M150.6 188.6 L141 198.7 M149 187.6 L139.8 197.4 M158.2 197.2 L149 206.6"/><path stroke="#fff" stroke-width="3" d="M140.2 181 L158.2 198.2"/><path d="M148.4 186.4 L148.4 177.4 L132.3 162.1"/></g>
<text transform="translate(141.6 168.6) rotate(42.5)" x="0" y="-0.6" font-family="Liberation Sans, sans-serif" font-size="7" font-weight="bold" text-anchor="middle" fill="#fff" stroke="none" textLength="19" lengthAdjust="spacingAndGlyphs">11445</text>
<path stroke="#ffff00" d="M97.2 172.2 L102.6 177.6 M21.9 250.5 L28.6 256.4 M170 96 L176 102.5"/>
<text transform="translate(107.5 182.2) rotate(-45)" x="0" y="2.4" font-family="Liberation Sans, sans-serif" font-size="7" font-weight="bold" text-anchor="middle" fill="#ffff00" stroke="none">K0</text>
<text transform="translate(32.6 260.8) rotate(-45)" x="0" y="2.4" font-family="Liberation Sans, sans-serif" font-size="7" font-weight="bold" text-anchor="middle" fill="#ffff00" stroke="none">K0</text>
<text transform="translate(181.9 104.6) rotate(-45)" x="0" y="2.4" font-family="Liberation Sans, sans-serif" font-size="7" font-weight="bold" text-anchor="middle" fill="#ffff00" stroke="none">K0</text>
<text transform="translate(140.5 363.4) rotate(-44.7)" x="0" y="4" font-family="Liberation Sans, Noto Sans CJK SC, sans-serif" font-size="11.5" font-weight="normal" text-anchor="middle" fill="#ff4000" stroke="none" textLength="46" lengthAdjust="spacingAndGlyphs">规划支路</text>
<text transform="translate(328.2 320.5) rotate(-78)" x="0" y="3.1" font-family="Liberation Sans, sans-serif" font-size="9" font-weight="bold" text-anchor="middle" fill="#ff4000" stroke="none" textLength="19.5" lengthAdjust="spacingAndGlyphs">992.800</text>
<text transform="translate(446.5 343.5) rotate(-78)" x="0" y="3.1" font-family="Liberation Sans, sans-serif" font-size="9" font-weight="bold" text-anchor="middle" fill="#ff4000" stroke="none" textLength="20" lengthAdjust="spacingAndGlyphs">996.000</text>
<text transform="translate(532.5 362) rotate(-80)" x="0" y="3.1" font-family="Liberation Sans, sans-serif" font-size="9" font-weight="bold" text-anchor="middle" fill="#ff4000" stroke="none" textLength="20" lengthAdjust="spacingAndGlyphs">996.000</text>
<text transform="translate(86.4 565.4) rotate(-36)" x="0" y="3.1" font-family="Liberation Sans, sans-serif" font-size="9" font-weight="bold" text-anchor="middle" fill="#ff4000" stroke="none" textLength="22" lengthAdjust="spacingAndGlyphs">992.800</text>
<text transform="translate(155.5 664.5) rotate(-36)" x="0" y="3.1" font-family="Liberation Sans, sans-serif" font-size="9" font-weight="bold" text-anchor="middle" fill="#ff4000" stroke="none" textLength="22" lengthAdjust="spacingAndGlyphs">996.000</text>
<text transform="translate(675.8 133.7) rotate(25.5)" x="19" y="-0.6" font-family="Liberation Sans, sans-serif" font-size="11" fill="#ff4000" stroke="#ff4000" stroke-width="0.3" textLength="45" lengthAdjust="spacingAndGlyphs">K4+683.110</text>
<text transform="translate(637.1 228) rotate(19.6)" x="18.5" y="-0.6" font-family="Liberation Sans, sans-serif" font-size="11" fill="#ff4000" stroke="#ff4000" stroke-width="0.3" textLength="46" lengthAdjust="spacingAndGlyphs">K4+701.030</text>
<text transform="translate(567.8 464.1) rotate(15.8)" x="18" y="-0.6" font-family="Liberation Sans, sans-serif" font-size="11" fill="#ff4000" stroke="#ff4000" stroke-width="0.3" textLength="49" lengthAdjust="spacingAndGlyphs">K4+746.340</text>
<text transform="translate(478.3 635.3) rotate(38.9)" x="17" y="-0.6" font-family="Liberation Sans, sans-serif" font-size="11" fill="#ff4000" stroke="#ff4000" stroke-width="0.3" textLength="46" lengthAdjust="spacingAndGlyphs">K4+781.260</text>
</svg></div>
<div id="lpanel"></div>
<div id="bottom"></div>
<svg id="btabs" viewBox="0 0 260 20" width="260" height="20">
<path d="M0 0 L7 15 Q8.5 18 12 18 L58 18 Q62 18 63.5 15 L70 0 Z" fill="#000"/>
<path d="M70 0 L77 15 Q78.5 18 82 18 L124 18 Q127.5 18 128.5 15 L133 0" fill="#f6f6f6" stroke="#222" stroke-width="1"/>
<path d="M133 0 L140 15 Q141.5 18 145 18 L186 18 Q189.5 18 190.5 15 L196 0" fill="#f6f6f6" stroke="#222" stroke-width="1"/>
<text x="34" y="14" text-anchor="middle" fill="#fff">模型</text>
<text x="101" y="14" text-anchor="middle" fill="#111">布局2</text>
<text x="165" y="14" text-anchor="middle" fill="#111">布局1</text>
</svg>
<div id="bline"></div><div id="bline2"></div>
</body></html>
